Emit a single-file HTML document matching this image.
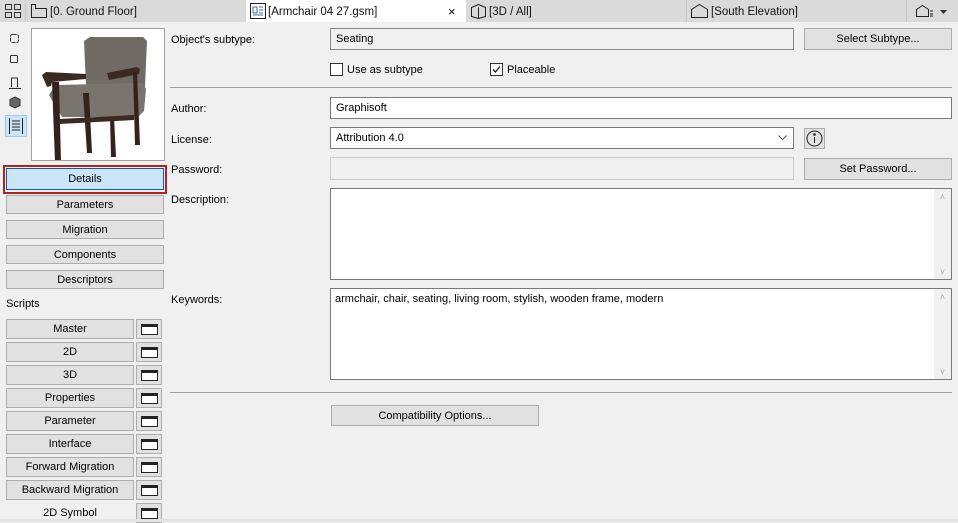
<!DOCTYPE html>
<html><head><style>
*{box-sizing:border-box;margin:0;padding:0}
body{width:958px;height:522px;background:#f0f0f0;font-family:"Liberation Sans",sans-serif;font-size:11px;color:#000;position:relative;overflow:hidden}
.a{position:absolute}
.tabbar{left:0;top:0;width:958px;height:22px;background:#dadada}
.tab{top:1px;height:22px;line-height:22px;font-size:11.5px;color:#111}
.sep{width:1px;height:22px;top:0;background:#c8c8c8}
.btn{position:absolute;background:#e1e1e1;border:1px solid #adadad;text-align:center;font-size:11px;line-height:19px}
.lbl{position:absolute;left:171px;font-size:11px}
.fld{position:absolute;background:#fff;border:1px solid #7a7a7a;font-size:11px;padding-left:5px}
.ib{position:absolute;left:136px;width:26px;height:20px;background:#e1e1e1;border:1px solid #adadad}
.ib i{position:absolute;left:4px;top:4px;width:17px;height:11px;border:1px solid #222;border-top-width:3px;background:#fff}
.cb{position:absolute;width:13px;height:13px;border:1px solid #333;background:#fff}
.sb{position:absolute;right:0;top:0;width:17px;bottom:0;background:#f0f0f0;color:#aaa;font-size:9px;text-align:center}
</style></head><body>
<div class="a tabbar"></div>
<svg class="a" style="left:5px;top:4px" width="16" height="14" viewBox="0 0 16 14" fill="none" stroke="#333"><rect x=".5" y=".5" width="6" height="5"/><rect x="9.5" y=".5" width="6" height="5"/><rect x=".5" y="8.5" width="6" height="5"/><rect x="9.5" y="8.5" width="6" height="5"/></svg>
<div class="a sep" style="left:25px"></div>
<svg class="a" style="left:31px;top:4px" width="16" height="14" fill="none" stroke="#222"><path d="M.5 13.5V.5h4v4h11v9z"/></svg>
<div class="a tab" style="left:50px">[0. Ground Floor]</div>
<div class="a" style="left:246px;top:0;width:220px;height:22px;background:#fff"></div>
<svg class="a" style="left:250px;top:3px" width="16" height="16" fill="none" stroke="#222"><rect x=".5" y=".5" width="15" height="15"/><path d="M3 4h4v6H3zM9 4h4M9 7h4M9 10h4M3 12h10" stroke="#3a6fb0"/></svg>
<div class="a tab" style="left:268px">[Armchair 04 27.gsm]</div>
<div class="a tab" style="left:448px;font-size:13px">×</div>
<svg class="a" style="left:471px;top:4px" width="16" height="15" fill="none" stroke="#222"><path d="M.5 3.5l7-3 7 3v9l-7 2-7-2zM7.5 3.5v11"/></svg>
<div class="a tab" style="left:489px">[3D / All]</div>
<div class="a sep" style="left:686px"></div>
<svg class="a" style="left:691px;top:4px" width="18" height="14" fill="none" stroke="#222"><path d="M.5 13.5V5.5l8-5 8 5v8z"/></svg>
<div class="a tab" style="left:711px">[South Elevation]</div>
<div class="a sep" style="left:906px"></div>
<svg class="a" style="left:916px;top:5px" width="32" height="12" fill="none" stroke="#222"><path d="M.5 11.5V4.5l6-4 6 4v7z"/><path d="M14 6h3M14 9h3M14 11h3" stroke="#222"/><path d="M24 5h7l-3.5 4z" fill="#333" stroke="none"/></svg>

<!-- left icon column -->
<svg class="a" style="left:9px;top:32px" width="14" height="80" fill="none" stroke="#333">
<rect x="1.5" y="2.5" width="8" height="8" rx="2" stroke-dasharray="4 1"/>
<rect x="1.5" y="23.5" width="7" height="7" rx="1"/>
<path d="M2.5 55v-9h6v9M0 56.5h12" />
<path d="M6 65l5 2.5v6l-5 2.5-5-2.5v-6z" fill="#666"/>
</svg>
<div class="a" style="left:5px;top:115px;width:22px;height:22px;background:#cce4f7;border:1px solid #99c9ef"></div>
<svg class="a" style="left:8px;top:118px" width="16" height="16" fill="none" stroke="#222"><path d="M1.5 0v16M14.5 0v16M4 3h8M4 6h8M4 9h8M4 12h8"/></svg>

<!-- preview -->
<div class="a" style="left:31px;top:28px;width:134px;height:133px;background:#fff;border:1px solid #a0a0a0"></div>
<svg class="a" style="left:32px;top:29px" width="132" height="131" viewBox="0 0 132 131">
<path d="M52 12l6-4h53l4 4-3 68H55z" fill="#716b65"/>
<path d="M17 66l6-10 88-2 3 6-2 22-6 6H30z" fill="#7a746e"/>
<path d="M10 46l4-3 40 2v5l-34 3-1 4-4 1z" fill="#3a2a22"/>
<path d="M75 44l30-6 3 2-1 5-30 6z" fill="#3a2a22"/>
<path d="M20 53l3 80h6l-2-80zM51 64l4 60h5l-3-60zM101 43l2 73h5l-3-73zM78 88l1 40h5l-2-40z" fill="#33231c"/>
<path d="M27 90l75-4v5l-75 4z" fill="#3a2a22"/>
</svg>

<!-- Details -->
<div class="a" style="left:3px;top:165px;width:164px;height:29px;border:2px solid #b22222"></div>
<div class="btn" style="left:6px;top:168px;width:158px;height:22px;background:#cce4f7;border-color:#0a5fa8;line-height:21px">Details</div>
<div class="btn" style="left:6px;top:195px;width:158px;height:19px;line-height:18px">Parameters</div>
<div class="btn" style="left:6px;top:220px;width:158px;height:19px;line-height:18px">Migration</div>
<div class="btn" style="left:6px;top:245px;width:158px;height:19px;line-height:18px">Components</div>
<div class="btn" style="left:6px;top:270px;width:158px;height:19px;line-height:18px">Descriptors</div>
<div class="a" style="left:6px;top:298px">Scripts</div>

<div class="btn" style="left:6px;top:319px;width:128px;height:20px">Master</div><div class="ib" style="top:319px"><i></i></div>
<div class="btn" style="left:6px;top:342px;width:128px;height:20px">2D</div><div class="ib" style="top:342px"><i></i></div>
<div class="btn" style="left:6px;top:365px;width:128px;height:20px">3D</div><div class="ib" style="top:365px"><i></i></div>
<div class="btn" style="left:6px;top:388px;width:128px;height:20px">Properties</div><div class="ib" style="top:388px"><i></i></div>
<div class="btn" style="left:6px;top:411px;width:128px;height:20px">Parameter</div><div class="ib" style="top:411px"><i></i></div>
<div class="btn" style="left:6px;top:434px;width:128px;height:20px">Interface</div><div class="ib" style="top:434px"><i></i></div>
<div class="btn" style="left:6px;top:457px;width:128px;height:20px">Forward Migration</div><div class="ib" style="top:457px"><i></i></div>
<div class="btn" style="left:6px;top:480px;width:128px;height:20px">Backward Migration</div><div class="ib" style="top:480px"><i></i></div>
<div class="a" style="left:6px;top:507px;width:128px;text-align:center">2D Symbol</div><div class="ib" style="top:503px"><i></i></div>
<div class="a" style="left:0;top:519px;width:958px;height:3px;background:#e3e3e3"></div>

<!-- right form -->
<div class="lbl" style="top:34px">Object's subtype:</div>
<div class="fld" style="left:330px;top:28px;width:464px;height:22px;background:#f0f0f0;line-height:21px;border-color:#888">Seating</div>
<div class="btn" style="left:804px;top:28px;width:148px;height:22px;line-height:21px">Select Subtype...</div>
<div class="cb" style="left:330px;top:63px"></div><div class="a" style="left:347px;top:64px">Use as subtype</div>
<div class="cb" style="left:490px;top:63px"></div>
<svg class="a" style="left:491px;top:64px" width="11" height="11" fill="none" stroke="#222" stroke-width="1.3"><path d="M2 5.5l2.5 2.5L9 2.5"/></svg>
<div class="a" style="left:507px;top:64px">Placeable</div>
<div class="a" style="left:170px;top:87px;width:782px;height:1px;background:#a0a0a0"></div>

<div class="lbl" style="top:103px">Author:</div>
<div class="fld" style="left:330px;top:97px;width:622px;height:22px;line-height:21px">Graphisoft</div>
<div class="lbl" style="top:134px">License:</div>
<div class="fld" style="left:330px;top:127px;width:464px;height:22px;line-height:21px">Attribution 4.0</div>
<svg class="a" style="left:778px;top:135px" width="9" height="6" fill="none" stroke="#555"><path d="M.5.5l4 4 4-4"/></svg>
<div class="a" style="left:804px;top:128px;width:21px;height:21px;background:#e1e1e1;border:1px solid #adadad"></div>
<svg class="a" style="left:806px;top:130px" width="17" height="17" fill="none" stroke="#222"><circle cx="8.5" cy="8.5" r="7.5"/><path d="M8.5 7v6"/><circle cx="8.5" cy="4.5" r=".8" fill="#222"/></svg>
<div class="lbl" style="top:164px">Password:</div>
<div class="fld" style="left:330px;top:157px;width:464px;height:23px;background:#f0f0f0;border-color:#ccc"></div>
<div class="btn" style="left:804px;top:158px;width:148px;height:22px;line-height:21px">Set Password...</div>

<div class="lbl" style="top:194px">Description:</div>
<div class="fld" style="left:330px;top:188px;width:622px;height:92px"><div class="sb"><div style="margin-top:3px">˄</div><div style="position:absolute;bottom:2px;width:17px">˅</div></div></div>
<div class="lbl" style="top:294px">Keywords:</div>
<div class="fld" style="left:330px;top:288px;width:622px;height:92px;padding:4px 0 0 4px">armchair, chair, seating, living room, stylish, wooden frame, modern<div class="sb"><div style="margin-top:3px">˄</div><div style="position:absolute;bottom:2px;width:17px">˅</div></div></div>
<div class="a" style="left:170px;top:392px;width:782px;height:1px;background:#a0a0a0"></div>
<div class="btn" style="left:331px;top:405px;width:208px;height:21px;line-height:20px">Compatibility Options...</div>
</body></html>
